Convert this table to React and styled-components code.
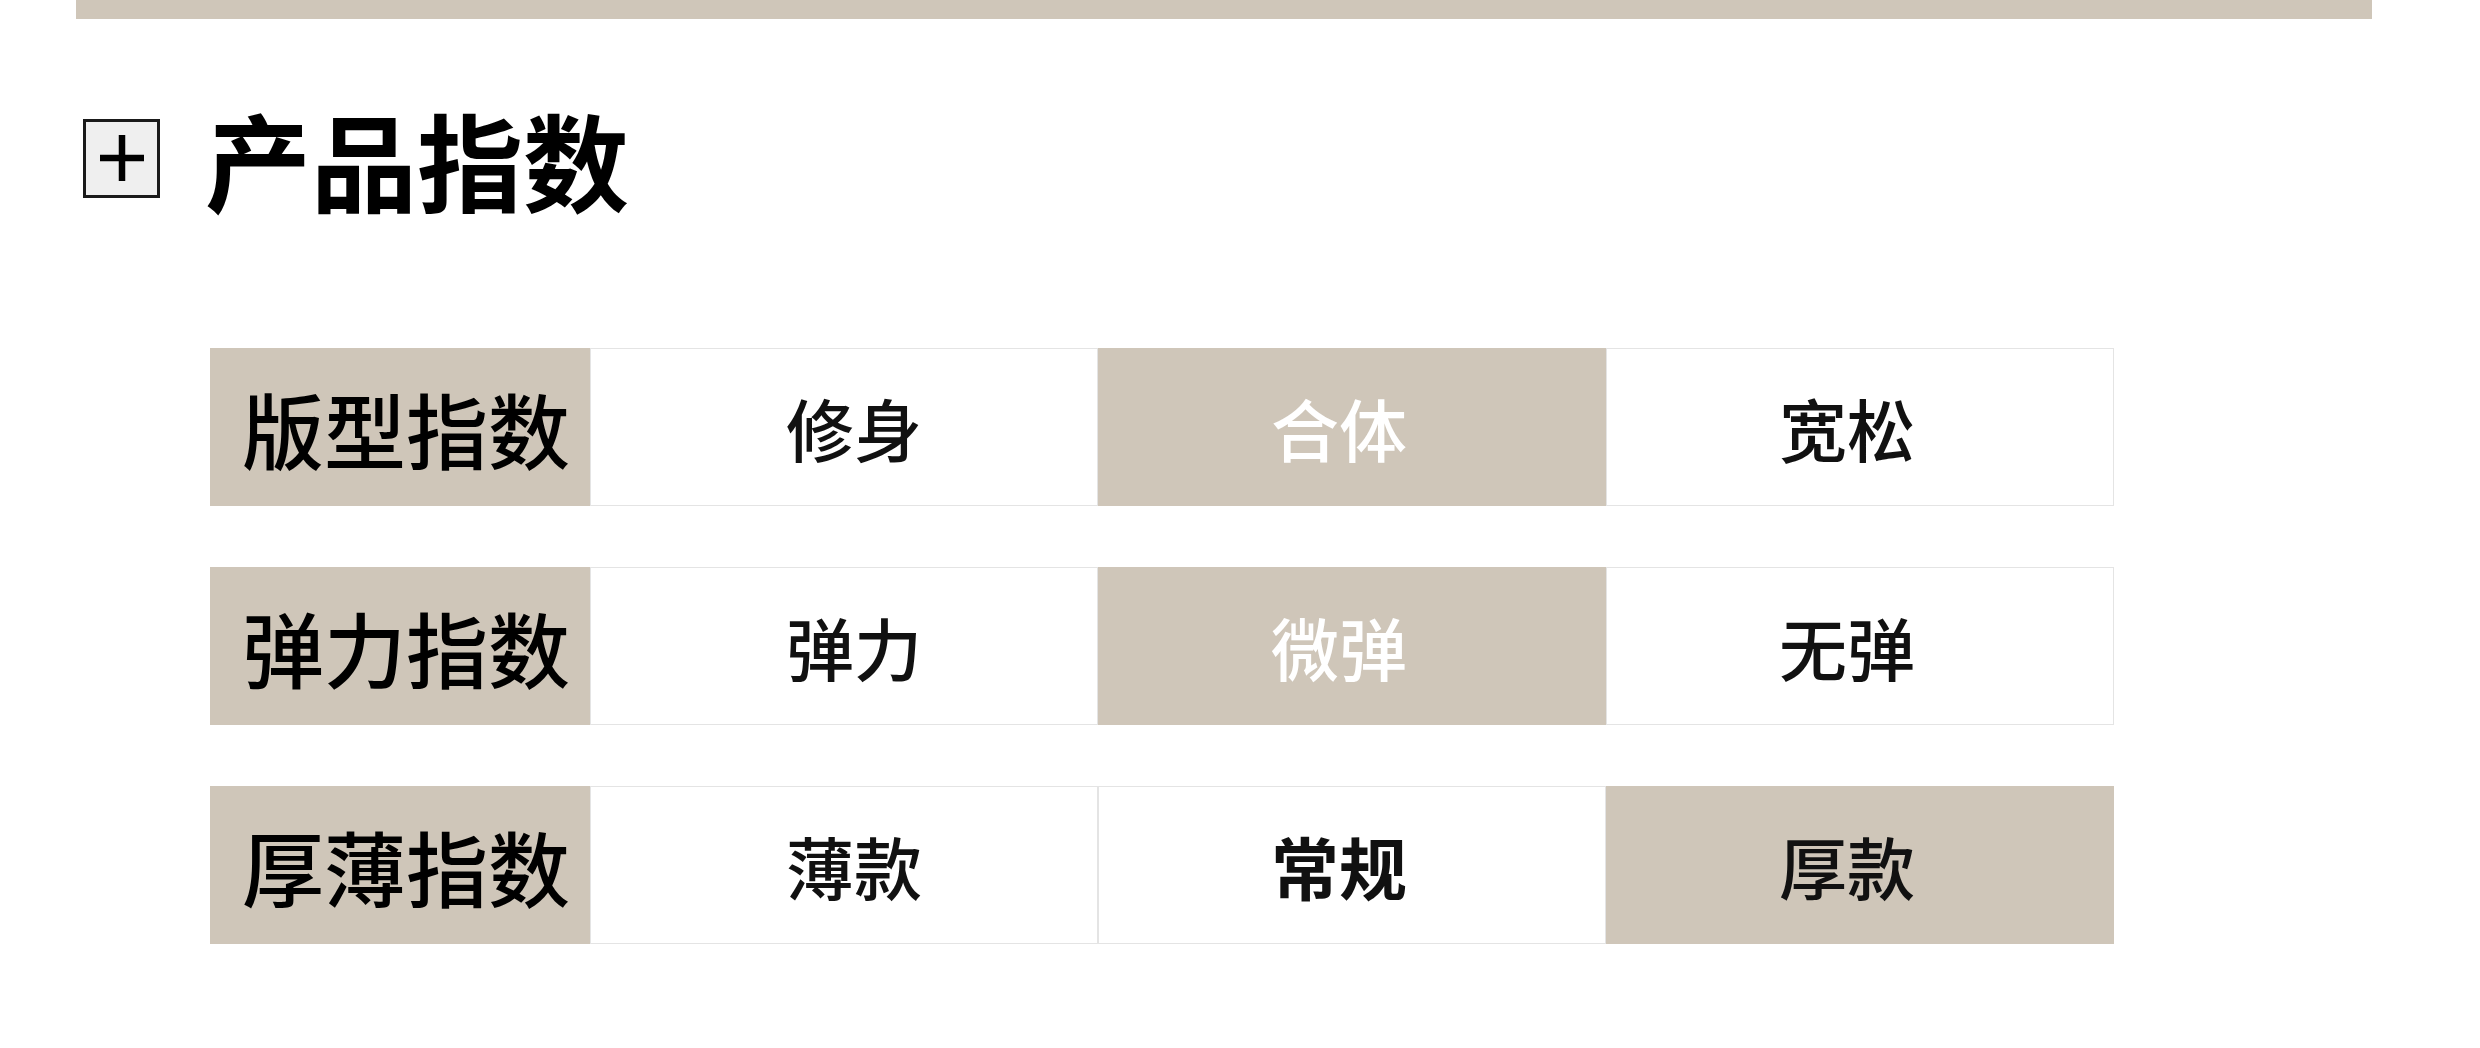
import React from "react";
import styled, { createGlobalStyle } from "styled-components";

const GlobalStyle = createGlobalStyle`
    body {
        margin: 0;
        background: #ffffff;
        font-family: "Noto Sans CJK SC", "Noto Sans", sans-serif;
    }
`;

const BEIGE = "#cfc6b9";

const Page = styled.div`
    width: 2480px;
    height: 1048px;
    background: #fff;
    overflow: hidden;
`;

const TopBar = styled.div`
    margin-left: 76px;
    width: 2296px;
    height: 19px;
    background: ${BEIGE};
`;

const Header = styled.div`
    display: flex;
    align-items: center;
    margin: 100px 0 0 83px;
    height: 78px;
`;

const PlusBox = styled.div`
    width: 71px;
    height: 73px;
    border: 3px solid #1a1a1a;
    background: #efefef;
    display: flex;
    align-items: center;
    justify-content: center;
    flex-shrink: 0;
`;

const Title = styled.h1`
    margin: 0 0 0 45px;
    font-size: 106px;
    font-weight: 700;
    line-height: 1;
    color: #000;
`;

const Table = styled.div`
    margin: 151px 0 0 210px;
    display: flex;
    flex-direction: column;
    gap: 61px;
`;

const Row = styled.div`
    display: grid;
    grid-template-columns: 380px repeat(3, 508px);
    height: 158px;
`;

const Label = styled.div`
    background: ${BEIGE};
    display: flex;
    align-items: center;
    justify-content: center;
    padding-left: 12px;
    font-size: 82px;
    font-weight: 500;
    color: #000;
`;

const Cell = styled.div`
    box-sizing: border-box;
    background: ${p => (p.$active ? BEIGE : "#fff")};
    border: 1px solid ${p => (p.$active ? BEIGE : "#e4e4e4")};
    display: flex;
    align-items: center;
    justify-content: center;
    padding: ${p => (p.$first ? "0 0 0 20px" : "0 26px 0 0")};
    font-size: 68px;
    font-weight: ${p => (p.$bold ? 700 : 500)};
    color: ${p => (p.$light ? "#fff" : "#111")};
`;

const rows = [
    { label: "版型指数", options: ["修身", "合体", "宽松"], active: 1, light: true },
    { label: "弹力指数", options: ["弹力", "微弹", "无弹"], active: 1, light: true },
    { label: "厚薄指数", options: ["薄款", "常规", "厚款"], active: 2, bold: 1 },
];

const PlusIcon = () => (
    <svg width="48" height="48" viewBox="0 0 48 48">
        <path d="M2 24H46M24 1V47" stroke="#000" strokeWidth="6.5" />
    </svg>
);

const App = () => (
    <Page>
        <GlobalStyle />
        <TopBar />
        <Header>
            <PlusBox>
                <PlusIcon />
            </PlusBox>
            <Title>产品指数</Title>
        </Header>
        <Table>
            {rows.map(row => (
                <Row key={row.label}>
                    <Label>{row.label}</Label>
                    {row.options.map((opt, i) => (
                        <Cell
                            key={opt}
                            $first={i === 0}
                            $active={i === row.active}
                            $light={i === row.active && row.light}
                            $bold={i === row.bold}
                        >
                            {opt}
                        </Cell>
                    ))}
                </Row>
            ))}
        </Table>
    </Page>
);

export default App;
